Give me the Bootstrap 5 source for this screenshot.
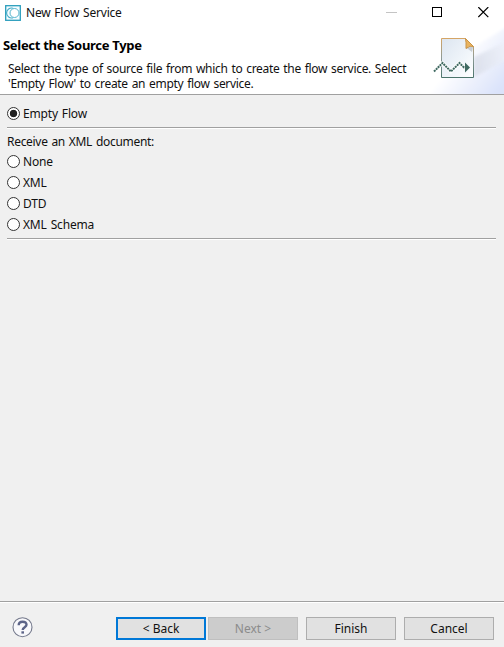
<!DOCTYPE html>
<html lang="en">
<head>
<meta charset="utf-8">
<meta name="viewport" content="width=device-width, initial-scale=1">
<title>New Flow Service</title>
<link href="https://cdn.jsdelivr.net/npm/bootstrap@5.3.0/dist/css/bootstrap.min.css" rel="stylesheet">
<style>
body{font-family:"Noto Sans","Open Sans",sans-serif;font-size:12px;line-height:15px;color:#111;background:#f0f0f0;height:647px;letter-spacing:-.17px;word-spacing:1px}
.wizard-head{height:95px;background:#fff;border-bottom:1px solid #a0a0a0}
.title-bar{height:25px;padding-left:5px;padding-right:15px}
.title-bar .caption{margin-left:5px;letter-spacing:-.22px}
.win-controls{gap:35px}
.head-main{height:69px}
.head-main h1{font-size:13px;line-height:16px;font-weight:700;color:#000;margin:12px 0 0 3px;letter-spacing:-.3px;word-spacing:0}
.head-main p{margin:8px 0 0 8px;white-space:nowrap;letter-spacing:-.3px}
.wizard-body{padding:8px 8px 0 7px}
.wizard-body .form-check{min-height:0;height:21px;padding:0;margin:0;gap:3px}
.wizard-body .form-check-input{float:none;margin:0;width:13px;height:13px;border:1px solid #333;background-color:#fff;flex:none}
.wizard-body .form-check-input:checked{background-color:#fff;background-image:radial-gradient(circle,#222 3.4px,transparent 4.1px)}
.rule{height:2px;background:#a0a0a0;border-bottom:1px solid #fff;margin-top:3px}
.group-label{margin-top:5px;height:17px;letter-spacing:-.3px}
.wizard-foot{height:46px;border-top:1px solid #a0a0a0;box-shadow:inset 0 1px #fff;padding:15px 10px 0 12px}
.wizard-foot .btn{width:90px;height:23px;padding:0;font-size:12px;line-height:20px;color:#111;background:#e1e1e1;border:1px solid #adadad;border-radius:0}
.wizard-foot .btn-default{border:2px solid #0078d7;line-height:19px;margin-right:2px}
.wizard-foot .btn:disabled{background:#ccc;border-color:#bfbfbf;color:#8b8b8b;opacity:1}
</style>
</head>
<body class="d-flex flex-column overflow-hidden">
<header class="wizard-head flex-shrink-0">
  <div class="title-bar d-flex align-items-center">
    <svg width="16" height="16" viewBox="0 0 16 16" fill="none"><rect x=".7" y=".7" width="14.600" height="14.600" fill="#f4fcff" stroke="#2a9dbc" stroke-width="1.300"/><path d="M8 3.200A5 5 0 1 0 8 12.800" stroke="#42abc7" stroke-width="1.100"/><circle cx="9.500" cy="8" r="4.500" fill="#fff" stroke="#55b5ce"/></svg>
    <span class="caption">New Flow Service</span>
    <div class="win-controls d-flex align-items-center ms-auto">
      <svg width="11" height="11"><path d="M0 5.500h11" stroke="#c4c4c4"/></svg>
      <svg width="11" height="11"><rect x=".5" y=".5" width="9" height="9" fill="none" stroke="#000" stroke-width="1"/></svg>
      <svg width="11" height="11"><path d="M.3.1l10 10M10.300.1l-10 10" stroke="#000" stroke-width="1.200"/></svg>
    </div>
  </div>
  <div class="head-main d-flex justify-content-between">
    <div>
      <h1>Select the Source Type</h1>
      <p>Select the type of source file from which to create the flow service. Select<br>'Empty Flow' to create an empty flow service.</p>
    </div>
    <svg class="flex-shrink-0" width="75" height="69" viewBox="429 25 75 69">
      <defs>
        <linearGradient id="glow" gradientUnits="userSpaceOnUse" x1="459" y1="55" x2="500" y2="88"><stop stop-color="#fff"/><stop offset="1" stop-color="#dbe3fa"/></linearGradient>
        <linearGradient id="beam" x1="0" x2="1"><stop stop-color="#d4d9e5"/><stop offset="1" stop-color="#f0f3fb"/></linearGradient>
        <linearGradient id="sheet" x1="0" y1="0" x2="1" y2="1"><stop stop-color="#dce5f0"/><stop offset=".6" stop-color="#f0f5fa"/><stop offset="1" stop-color="#fff"/></linearGradient>
        <linearGradient id="edge" x1="0" y1="0" x2="0" y2="1"><stop stop-color="#d5a566"/><stop offset=".5" stop-color="#8d9a96"/><stop offset="1" stop-color="#4b746b"/></linearGradient>
        <filter id="soft"><feGaussianBlur stdDeviation="1.500"/></filter>
      </defs>
      <path d="M510 25L474 47L429 80V100H510z" fill="url(#glow)" filter="url(#soft)"/>
      <path d="M474 57L508 41V59L474 77z" fill="url(#beam)" opacity=".7" filter="url(#soft)"/>
      <path d="M441.500 38.500H465.500L473.500 46.500V77.500H441.500z" fill="url(#sheet)" stroke="url(#edge)"/>
      <path d="M465.500 47L473 47L472 52z" fill="#aeb4bb" opacity=".6"/>
      <path d="M465.500 38.500L473.500 46.500Q470 45 466 48.500Q466.300 42 465.500 38.500z" fill="#e9b35e" stroke="#c99345"/>
      <path d="M434 71.500L442.500 63L451 71.500L459.500 63L464 67.500H466" fill="none" stroke="#fff" stroke-width="3.600"/>
      <path d="M434 71.500L442.500 63L451 71.500L459.500 63L464 67.500H466" fill="none" stroke="#3f6961" stroke-width="2" stroke-dasharray="2 .7"/>
      <path d="M465 62.500L470 67.500L465 72.500z" fill="#3f6961"/>
    </svg>
  </div>
</header>
<main class="wizard-body flex-grow-1">
  <div class="form-check d-flex align-items-center"><input class="form-check-input" type="radio" name="source" id="empty" checked><label for="empty">Empty Flow</label></div>
  <div class="rule"></div>
  <div class="group-label">Receive an XML document:</div>
  <div class="form-check d-flex align-items-center"><input class="form-check-input" type="radio" name="source" id="none"><label for="none">None</label></div>
  <div class="form-check d-flex align-items-center"><input class="form-check-input" type="radio" name="source" id="xml"><label for="xml">XML</label></div>
  <div class="form-check d-flex align-items-center"><input class="form-check-input" type="radio" name="source" id="dtd"><label for="dtd">DTD</label></div>
  <div class="form-check d-flex align-items-center"><input class="form-check-input" type="radio" name="source" id="schema"><label for="schema">XML Schema</label></div>
  <div class="rule"></div>
</main>
<footer class="wizard-foot d-flex align-items-start flex-shrink-0">
  <svg width="21" height="21" viewBox="0 0 21 21" fill="none"><circle cx="10.500" cy="10.200" r="9.500" fill="#f8f8fb" stroke="#74798c" stroke-width="1.100"/><path d="M6.700 8.200Q6.700 4.700 10.600 4.700T14.500 7.800C14.500 10.200 10.700 10.200 10.700 13" stroke="#5c6488" stroke-width="2.400"/><path d="M9.400 14.300h2.600v2.300h-2.600z" fill="#5c6488"/></svg>
  <div class="d-flex ms-auto">
    <button class="btn btn-default">&lt; Back</button>
    <button class="btn" disabled>Next &gt;</button>
    <button class="btn ms-2">Finish</button>
    <button class="btn ms-2">Cancel</button>
  </div>
</footer>
<script src="https://cdn.jsdelivr.net/npm/bootstrap@5.3.0/dist/js/bootstrap.bundle.min.js"></script>
</body>
</html>
